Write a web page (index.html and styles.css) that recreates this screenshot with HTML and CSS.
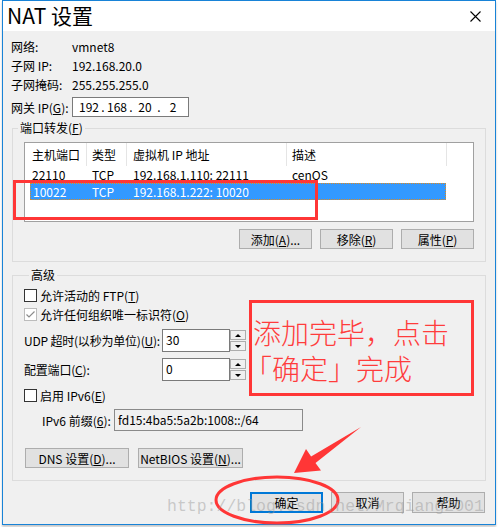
FILE: index.html
```html
<!DOCTYPE html>
<html lang="zh-CN">
<head>
<meta charset="utf-8">
<title>NAT 设置</title>
<link rel="stylesheet" href="styles.css">
</head>
<body>
<div class="page">
  <div class="window">
    <div class="titlebar">
      <span class="title">NAT 设置</span>
      <svg class="close" width="11" height="11" viewBox="0 0 11 11"><path d="M0.5 0.5L10.5 10.5M10.5 0.5L0.5 10.5" stroke="#000" stroke-width="1.1" fill="none"/></svg>
    </div>
    <div class="content">
      <div class="info-row"><span class="lbl">网络:</span><span>vmnet8</span></div>
      <div class="info-row"><span class="lbl">子网 IP:</span><span>192.168.20.0</span></div>
      <div class="info-row"><span class="lbl">子网掩码:</span><span>255.255.255.0</span></div>
      <div class="info-row gw"><span class="lbl">网关 IP(<u>G</u>):</span>
        <div class="ipbox"><span class="oct">192</span><span class="dot">.</span><span class="oct">168</span><span class="dot">.</span><span class="oct">20</span><span class="dot">.</span><span class="oct">2</span></div>
      </div>

      <fieldset class="group g1">
        <legend>端口转发(<u>F</u>)</legend>
        <div class="listview">
          <div class="lv-head"><span class="h1">主机端口</span><span class="h2">类型</span><span class="h3">虚拟机 IP 地址</span><span class="h4">描述</span></div>
          <div class="lv-row"><span class="c1">22110</span><span class="c2">TCP</span><span class="c3">192.168.1.110: 22111</span><span class="c4">cenOS</span></div>
          <div class="lv-row selected"><span class="c1">10022</span><span class="c2">TCP</span><span class="c3">192.168.1.222: 10020</span><span class="c4"></span></div>
        </div>
        <div class="btn-row">
          <button class="btn">添加(<u>A</u>)...</button>
          <button class="btn">移除(<u>R</u>)</button>
          <button class="btn">属性(<u>P</u>)</button>
        </div>
      </fieldset>

      <fieldset class="group g2">
        <legend>高级</legend>
        <div class="check-row first"><span class="cb"></span>允许活动的 FTP(<u>T</u>)</div>
        <div class="check-row"><span class="cb disabled"><svg width="11" height="11" viewBox="0 0 11 11"><path d="M1.5 5.5L4 8L9.5 2.5" stroke="#8c8c8c" stroke-width="1.2" fill="none"/></svg></span>允许任何组织唯一标识符(<u>O</u>)</div>
        <div class="field-row udp"><span class="flbl">UDP 超时(以秒为单位)(<u>U</u>):</span>
          <div class="spin"><div class="spin-input">30</div><div class="spin-btns"><span class="sb"><i class="up"></i></span><span class="sb"><i class="down"></i></span></div></div>
        </div>
        <div class="field-row port"><span class="flbl">配置端口(<u>C</u>):</span>
          <div class="spin"><div class="spin-input">0</div><div class="spin-btns"><span class="sb"><i class="up"></i></span><span class="sb"><i class="down"></i></span></div></div>
        </div>
        <div class="check-row ipv6"><span class="cb"></span>启用 IPv6(<u>E</u>)</div>
        <div class="prefix-row"><span class="plbl">IPv6 前缀(<u>6</u>):</span><div class="prefix-input">fd15:4ba5:5a2b:1008::/64</div></div>
        <div class="btn-row2">
          <button class="btn dns">DNS 设置(<u>D</u>)...</button>
          <button class="btn dns">NetBIOS 设置(<u>N</u>)...</button>
        </div>
      </fieldset>

      <div class="footer">
        <button class="btn default">确定</button>
        <button class="btn">取消</button>
        <button class="btn">帮助</button>
      </div>
    </div>
  </div>

  <div class="mark rect1"></div>
  <div class="mark note">添加完毕，点击<br><span class="lq">「</span>确定」完成</div>
  <svg class="anno" width="498" height="527" viewBox="0 0 498 527">
    <ellipse cx="277" cy="500" rx="61" ry="23" fill="none" stroke="#ff3636" stroke-width="3"/>
    <polygon points="361,427 315.5,463.1 321,470.5 294,473 306,449 311.1,456.5" fill="#ff3636"/>
  </svg>
  <div class="watermark">http://blog.csdn.net/Mrqiang2001</div>
</div>
</body>
</html>
```
FILE: styles.css
```css
* { box-sizing: border-box; }
html, body { margin: 0; padding: 0; background: #fff; }
body {
  font-family: "Noto Sans CJK SC", "Noto Sans", sans-serif;
  font-size: 12px;
  color: #000;
}
u { text-decoration: underline; text-underline-offset: 1px; }

.page { position: relative; width: 498px; height: 527px; overflow: hidden; }

.window {
  margin-left: 2px;
  width: 494px;
  height: 525px;
  border: 1px solid #1883d7;
  display: flex;
  flex-direction: column;
  box-shadow: 0 2px 2px rgba(0,0,0,0.22);
}

.titlebar {
  height: 30px;
  background: #fff;
  display: flex;
  align-items: center;
  justify-content: space-between;
  padding: 0 14px 0 4px;
}
.title { font-size: 21px; line-height: 30px; margin-top: -2px; }
.close { display: block; }

.content {
  flex: 1;
  background: #f0f0f0;
  padding: 6px 0 0 0;
}

.info-row {
  display: flex;
  align-items: center;
  height: 19px;
  line-height: 19px;
  padding-left: 8px;
}
.info-row .lbl { width: 61px; flex: none; }
.info-row.gw { margin-top: 3px; height: 20px; }

.ipbox {
  width: 117px;
  height: 20px;
  border: 1px solid #7a7a7a;
  background: #fff;
  display: flex;
  align-items: center;
  padding-left: 4px;
  line-height: 16px;
}
.ipbox .oct { width: 24px; text-align: center; }
.ipbox .dot { width: 4px; text-align: center; }

.group {
  margin: 0 0 0 9px;
  width: 474px;
  border: 1px solid #dcdcdc;
  padding: 0;
  min-width: 0;
}
.group legend {
  margin-left: 5px;
  padding: 0 2px;
  line-height: 16px;
  height: 16px;
}
.g1 { margin-top: 3px; padding-bottom: 12px; }
.g2 { margin-top: 5px; padding: 0 0 12px 11px; }

.listview {
  margin: 6px 0 0 11px;
  width: 450px;
  height: 80px;
  border: 1px solid #a0a0a0;
  background: #fff;
}
.lv-head { display: flex; height: 23px; line-height: 23px; }
.lv-head span { border-right: 1px solid #e5e5e5; flex: none; }
.lv-head .h1 { width: 62px; padding-left: 7px; }
.lv-head .h2 { width: 40px; padding-left: 5px; }
.lv-head .h3 { width: 160px; padding-left: 6px; }
.lv-head .h4 { width: 160px; padding-left: 5px; }

.lv-row {
  display: flex;
  margin-left: 5px;
  width: 416px;
  height: 17px;
  line-height: 15px;
  border: 1px dotted transparent;
}
.lv-row span { flex: none; white-space: nowrap; }
.lv-row .c1 { width: 56px; padding-left: 1px; }
.lv-row .c2 { width: 40px; padding-left: 5px; }
.lv-row .c3 { width: 160px; padding-left: 6px; }
.lv-row .c4 { width: 158px; padding-left: 5px; }
.lv-row.selected { background: #3399ff; color: #fff; border-color: #e08a1e; }
.lv-row.selected .c1 { padding-left: 2px; }

.btn {
  font-family: inherit;
  font-size: 12px;
  color: #000;
  background: #e1e1e1;
  border: 1px solid #adadad;
  height: 20px;
  width: 73px;
  padding: 0;
  margin: 0;
  line-height: 17px;
  border-radius: 0;
}
.btn-row {
  margin: 7px 0 0 11px;
  width: 450px;
  display: flex;
  justify-content: flex-end;
  gap: 8px;
}

.check-row {
  display: flex;
  align-items: center;
  height: 19px;
}
.check-row.first { margin-top: 3px; }
.check-row.ipv6 { margin-top: 5px; }
.cb {
  width: 13px;
  height: 13px;
  border: 1px solid #333;
  background: #fff;
  margin-right: 3px;
  flex: none;
  display: flex;
  align-items: center;
  justify-content: center;
}
.cb.disabled { border-color: #bcbcbc; }
.cb svg { display: block; }

.field-row { display: flex; align-items: center; height: 23px; }
.field-row.udp { margin-top: 5px; }
.field-row.port { margin-top: 6px; }
.flbl { width: 138px; flex: none; white-space: nowrap; letter-spacing: -0.2px; }
.spin { display: flex; height: 23px; }
.spin-input {
  width: 68px;
  height: 23px;
  border: 1px solid #7a7a7a;
  background: #fff;
  padding: 2px 0 0 3px;
  line-height: 16px;
}
.spin-btns {
  display: flex;
  flex-direction: column;
  gap: 1px;
  padding-top: 1px;
}
.sb {
  width: 16px;
  height: 10px;
  border: 1px solid #adadad;
  background: #f0f0f0;
  display: flex;
  align-items: center;
  justify-content: center;
}
.sb i { width: 0; height: 0; border-left: 3px solid transparent; border-right: 3px solid transparent; }
.sb i.up { border-bottom: 3px solid #000; }
.sb i.down { border-top: 3px solid #000; }

.prefix-row {
  display: flex;
  align-items: center;
  margin-top: 4px;
  height: 22px;
  padding-left: 18px;
}
.plbl { width: 72px; flex: none; white-space: nowrap; }
.prefix-input {
  width: 189px;
  height: 22px;
  border: 1px solid #8a8a8a;
  background: #f0f0f0;
  padding-left: 3px;
  line-height: 20px;
}

.btn-row2 { display: flex; gap: 9px; margin: 17px 0 0 1px; }
.btn.dns { width: 104px; }
.btn-row2 .btn.dns:last-child { width: 105px; }

.footer {
  display: flex;
  justify-content: flex-end;
  gap: 8px;
  margin: 11px 10px 0 0;
}
.footer .btn { height: 21px; }
.btn.default { border: 2px solid #0078d7; }

/* annotations over the screenshot */
.mark { position: absolute; border: 3px solid #ff3636; }
.rect1 { left: 13px; top: 180px; width: 305px; height: 40px; }
.note {
  left: 249px;
  top: 300px;
  width: 225px;
  height: 96px;
  padding: 11px 0 0 1px;
  color: #ff3c3c;
  font-size: 28px;
  font-weight: 300;
  line-height: 36px;
  white-space: nowrap;
}
.note .lq { margin-left: -9px; }
.anno { position: absolute; left: 0; top: 0; pointer-events: none; }
.watermark {
  position: absolute;
  left: 167px;
  top: 497px;
  font-family: "Liberation Mono", monospace;
  font-size: 16.5px;
  line-height: 20px;
  color: rgba(150,150,150,0.45);
  white-space: nowrap;
  pointer-events: none;
}
```
